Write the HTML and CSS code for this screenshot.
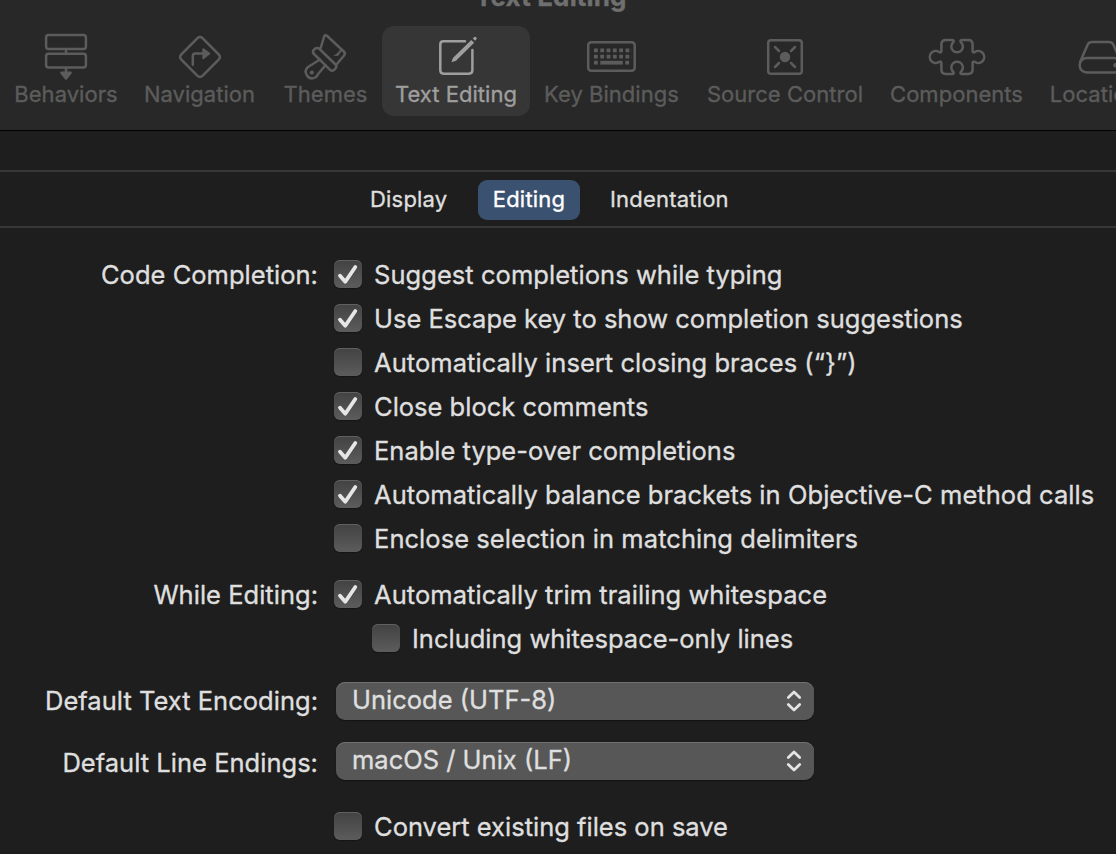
FILE: index.html
```html
<!DOCTYPE html>
<html lang="en">
<head>
<meta charset="utf-8">
<title>Text Editing</title>
<link rel="stylesheet" href="styles.css">
</head>
<body>
<header class="toolbar">
  <div class="title"><span>Text Editing</span></div>
  <nav class="items">
    <div class="item behaviors">
      <svg class="icon" viewBox="36 32 60 50"><g class="line"><rect x="46.1" y="35.1" width="39.8" height="13.8" rx="2.5"/><rect x="46.1" y="53.8" width="39.8" height="13.8" rx="2.5"/><path d="M66 49v5M66 68v5"/></g><path class="solid" d="M61 71.5h10q1.4.6.6 2l-4.6 5.800q-1 1-2 0l-4.600-5.800q-.8-1.400.6-2z"/></svg>
      <span class="label">Behaviors</span>
    </div>
    <div class="item navigation">
      <svg class="icon" viewBox="170 32 60 50"><g class="line"><rect x="184.9" y="41.9" width="30.200" height="30.200" rx="3.500" transform="rotate(45 200 57)"/><path d="M192.800 64.800V56q0-2.500 2.500-2.500H203"/></g><path class="solid" d="M202.300 48.800q.5-1 1.600-.3l6 4.200q1 .8 0 1.600l-6 4.700q-1.100.7-1.600-.3z"/></svg>
      <span class="label">Navigation</span>
    </div>
    <div class="item themes">
      <svg class="icon" viewBox="296.500 32 60 50"><g class="line"><path d="M321 48.500L324.500 37q1-3 3.200-1L344.300 51.500q2 2 .3 4L337 64.500"/><path d="M315.500 48.700q2.700-1.500 4.500.3l16 15.500q1.800 2-.2 4.200l-1.400 1.400q-2 1.400-3.800-.3L314 53.500q-1.500-2.500 1.500-4.800z"/><path d="M320.500 59.500L308.500 67q-4 3.600-1.200 8.200 3.400 5 8.500 2.300 2-1.500 3-3.700l7.200-8.600"/></g><path class="solid" d="M341.500 48.500l1.500 1.500-4.500 6-5-.2q4.500-1.800 8-7.300z"/><circle class="solid" cx="312.300" cy="72.500" r="2.100"/></svg>
      <span class="label">Themes</span>
    </div>
    <div class="item editing selected">
      <svg class="icon" viewBox="426 32 60 50"><g class="line"><path d="M465 41.300H443.500Q440.300 41.300 440.300 44.500V70.300Q440.300 73.700 443.500 73.700H469Q472.400 73.700 472.400 70.300V50"/></g><path class="solid" d="M471.300 39.900l2.900 2.900-18.200 18-4.500 1.500 1.400-4.200zM472.800 38.400l1.200-1.200q1.200-.9 2.200 0 1 1.100.1 2.300l-1.200 1.200z"/></svg>
      <span class="label">Text Editing</span>
    </div>
    <div class="item bindings">
      <svg class="icon" viewBox="582 32 60 50"><g class="line"><rect x="588.200" y="42.300" width="46.500" height="28.500" rx="3"/></g><path class="keys" d="M594 50.400h38M594 56.600h38"/><path class="keys" d="M594 62.700h5M625.300 62.700h5"/><path class="bar" d="M600.300 62.700h22.500"/></svg>
      <span class="label">Key Bindings</span>
    </div>
    <div class="item source">
      <svg class="icon" viewBox="755 32 60 50"><g class="line"><rect x="768.200" y="40.200" width="33.600" height="33.600" rx="2.800"/><path d="M775 47l4 4M795 47l-4 4M775 67l4-4M795 67l-4-4"/></g><circle class="solid" cx="785" cy="57" r="5.200"/></svg>
      <span class="label">Source Control</span>
    </div>
    <div class="item components">
      <svg class="icon" viewBox="926.500 32 60 50"><g class="line"><path d="M945.300 40H951q3 0 2 2A5.800 5.800 0 1 0 960.200 42q-1-2 2-2h5.500q4.400 0 4.400 4.400v6.600q0 2 2 1.200A6 6 0 1 1 974.100 61.800q-2-.8-2 1.200v6.600q0 4.400-4.400 4.400h-5.500q-3 0-2-2A5.800 5.800 0 1 0 953 72q1 2-2 2h-5.700q-4.400 0-4.400-4.400v-6.600q0-2-2-1.200A6 6 0 1 1 938.900 52.200q2 .8 2-1.200v-6.600q0-4.400 4.400-4.400z"/></g></svg>
      <span class="label">Components</span>
    </div>
    <div class="item locations">
      <svg class="icon" viewBox="1070.500 32 60 50"><g class="line"><path d="M1080 61l7.200-16.500q1.300-2.500 4.300-2.500h17q3 0 4.300 2.500L1120 61"/><rect x="1079.200" y="58" width="41.600" height="14.500" rx="7"/></g><circle class="solid" cx="1115" cy="65.200" r="2.200"/></svg>
      <span class="label">Locations</span>
    </div>
  </nav>
</header>
<nav class="tabs">
  <span class="tab t-display">Display</span>
  <span class="tab active">Editing</span>
  <span class="tab t-indent">Indentation</span>
</nav>
<main class="form">
  <section class="group completion">
    <div class="caption">Code Completion:</div>
    <div class="options">
      <label class="row"><span class="box"><svg viewBox="0 0 28 28"><path d="M6 15.700l5.300 6L21.300 7"/></svg></span><span class="wide">Suggest completions while typing</span></label>
      <label class="row"><span class="box"><svg viewBox="0 0 28 28"><path d="M6 15.700l5.300 6L21.300 7"/></svg></span><span>Use Escape key to show completion suggestions</span></label>
      <label class="row"><span class="box"></span><span class="wide">Automatically insert closing braces (“}”)</span></label>
      <label class="row"><span class="box"><svg viewBox="0 0 28 28"><path d="M6 15.700l5.300 6L21.300 7"/></svg></span><span>Close block comments</span></label>
      <label class="row"><span class="box"><svg viewBox="0 0 28 28"><path d="M6 15.700l5.300 6L21.300 7"/></svg></span><span>Enable type-over completions</span></label>
      <label class="row"><span class="box"><svg viewBox="0 0 28 28"><path d="M6 15.700l5.300 6L21.300 7"/></svg></span><span class="wide">Automatically balance brackets in Objective-C method calls</span></label>
      <label class="row"><span class="box"></span><span class="wide">Enclose selection in matching delimiters</span></label>
    </div>
  </section>
  <section class="group while">
    <div class="caption">While Editing:</div>
    <div class="options">
      <label class="row"><span class="box"><svg viewBox="0 0 28 28"><path d="M6 15.700l5.300 6L21.300 7"/></svg></span><span class="wide">Automatically trim trailing whitespace</span></label>
      <label class="row indented"><span class="box"></span><span>Including whitespace-only lines</span></label>
    </div>
  </section>
  <section class="group encoding">
    <div class="caption">Default Text Encoding:</div>
    <div class="select"><span>Unicode (UTF-8)</span><svg class="chevrons" viewBox="0 0 16 24"><path d="M2.300 8.500L8 3l5.700 5.500M2.300 15.500L8 21l5.700-5.500"/></svg></div>
  </section>
  <section class="group endings">
    <div class="caption">Default Line Endings:</div>
    <div class="select"><span>macOS / Unix (LF)</span><svg class="chevrons" viewBox="0 0 16 24"><path d="M2.300 8.500L8 3l5.700 5.500M2.300 15.500L8 21l5.700-5.500"/></svg></div>
  </section>
  <section class="group convert">
    <div class="caption"></div>
    <div class="options">
      <label class="row"><span class="box"></span><span>Convert existing files on save</span></label>
    </div>
  </section>
</main>
</body>
</html>
```
FILE: styles.css
```css
* { box-sizing: border-box; }
body {
  margin: 0;
  width: 1116px;
  height: 854px;
  overflow: hidden;
  background: #1e1e1e;
  color: #dfdfdf;
  font-family: Inter, "Liberation Sans", sans-serif;
  font-size: 25.5px;
  white-space: nowrap;
  -webkit-text-stroke: .35px currentColor;
}
.toolbar {
  height: 131px;
  background: #282828;
  border-bottom: 1px solid #000;
  overflow: hidden;
}
.title {
  height: 26px;
  padding-left: 475px;
  display: flex;
  align-items: flex-start;
  font-size: 26px;
  font-weight: 700;
  letter-spacing: .15px;
  line-height: 30px;
  color: #6f6f6f;
}
.title span { margin-top: -18px; }
.items { display: flex; width: 1170px; padding-left: 2px; }
.item {
  display: flex;
  flex-direction: column;
  align-items: center;
  flex: none;
  height: 90px;
  padding-top: 6px;
  color: #5c5c5c;
}
.behaviors { width: 128px; }
.navigation { width: 139px; }
.themes { width: 113px; }
.editing { width: 148px; }
.bindings { width: 163px; }
.source { width: 184px; }
.components { width: 159px; }
.locations { width: 129px; }
.selected { background: #363636; border-radius: 12px; color: #9f9f9f; }
.icon { width: 60px; height: 50px; display: block; }
.line { fill: none; stroke: currentColor; stroke-width: 2.5; stroke-linecap: round; stroke-linejoin: round; }
.solid { fill: currentColor; }
.keys { stroke: currentColor; stroke-width: 3.8; stroke-dasharray: 3.8 2.5; }
.bar { stroke: currentColor; stroke-width: 3.8; }
.label { font-size: 22px; line-height: 26px; margin-top: -1px; letter-spacing: .03px; }

.tabs {
  height: 58px;
  margin-top: 39px;
  padding: 8px 0 0 370px;
  border-top: 2px solid #373737;
  border-bottom: 2px solid #373737;
  display: flex;
  align-items: flex-start;
  font-size: 22px;
  letter-spacing: .2px;
}
.tab { line-height: 39px; height: 40px; }
.t-display { width: 108px; }
.active { width: 102px; background: #3b5170; border-radius: 9px; color: #fff; text-align: center; }
.t-indent { margin-left: 30px; }

.form { padding-top: 25px; }
.group { display: flex; }
.caption { width: 318px; margin-right: 16px; text-align: right; line-height: 44px; letter-spacing: .02px; }
.row { display: flex; align-items: flex-start; height: 44px; line-height: 44px; }
.wide { letter-spacing: .05px; }
.indented { padding-left: 38px; }
.box {
  width: 28px;
  height: 28px;
  margin: 7px 12px 0 0;
  border-radius: 6px;
  background: linear-gradient(#424242, #5c5c5c);
  box-shadow: inset 0 1px 0 #606060, 0 1px 1px rgba(0, 0, 0, .3);
}
.box svg { display: block; width: 28px; height: 28px; fill: none; stroke: #e6e6e6; stroke-width: 3.8; stroke-linecap: round; stroke-linejoin: round; }
.while { margin-top: 12px; }
.encoding { margin-top: 18px; }
.endings { margin-top: 18px; }
.convert { margin-top: 20px; }
.select {
  width: 478px;
  height: 38px;
  margin: 3px 0 0 2px;
  padding: 0 12px 0 16px;
  display: flex;
  align-items: center;
  justify-content: space-between;
  border-radius: 9px;
  background: #575757;
  box-shadow: inset 0 1px 0 #707070, 0 1px 1px rgba(0, 0, 0, .4);
}
.select span { line-height: 36px; height: 38px; }
.endings .select { margin-top: 1px; }
.chevrons { width: 16px; height: 24px; fill: none; stroke: #e4e4e4; stroke-width: 2.7; stroke-linecap: round; stroke-linejoin: round; }
```
